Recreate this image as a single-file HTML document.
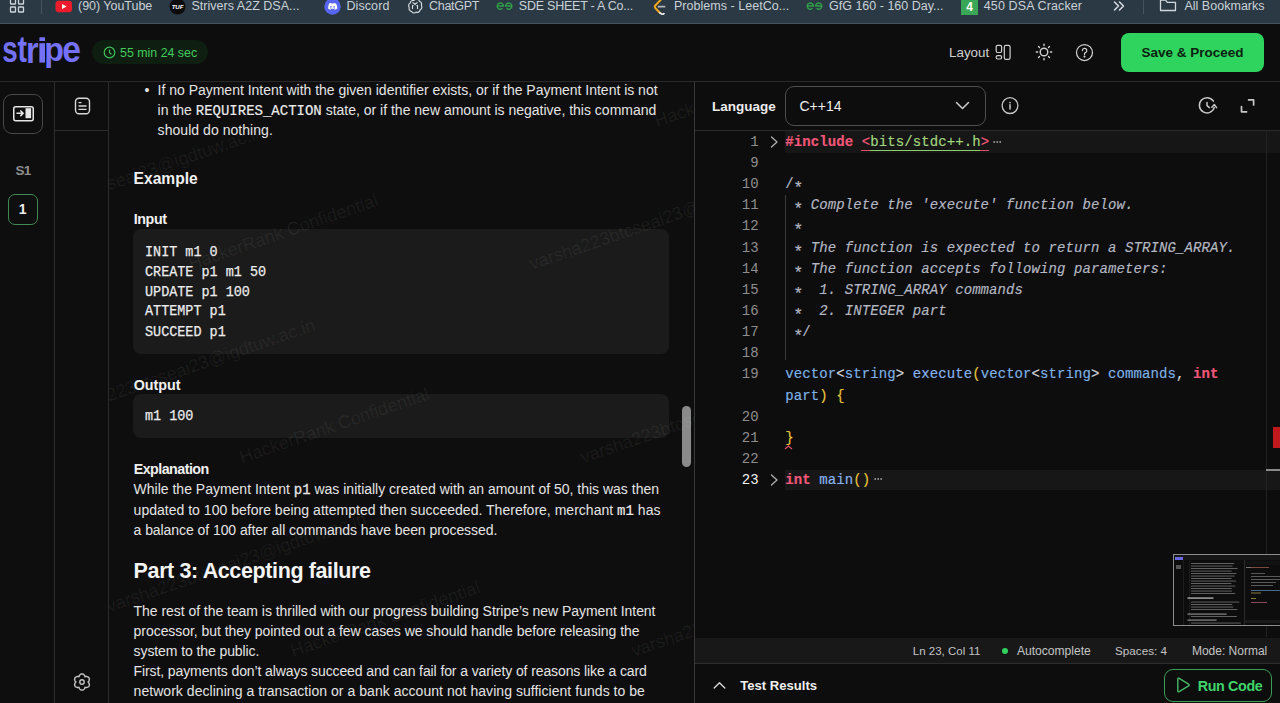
<!DOCTYPE html>
<html><head><meta charset="utf-8">
<style>
*{box-sizing:border-box;margin:0;padding:0}
html,body{width:1280px;height:703px;overflow:hidden;background:#0e0e0e;font-family:"Liberation Sans",sans-serif;color:#e8e8e8}
.abs{position:absolute}
#bm{position:absolute;left:0;top:0;width:1280px;height:24px;background:#2b3944;overflow:hidden;z-index:2}
#bm .it{position:absolute;top:-3px;white-space:nowrap}
#hdr{position:absolute;left:0;top:23px;width:1280px;height:59px;background:#0d0d0d;border-bottom:1px solid #2a2a2a}
#side1{position:absolute;left:0;top:82px;width:55px;height:621px;border-right:1px solid #2c2c2c;background:#0e0e0e}
#side2{position:absolute;left:55px;top:82px;width:54px;height:621px;border-right:1px solid #2c2c2c;background:#0e0e0e}
#content{position:absolute;left:109px;top:82px;width:585px;height:621px;background:#0e0e0e;overflow:hidden}
#editor{position:absolute;left:694px;top:82px;width:586px;height:621px;background:#0d0d0d;border-left:1px solid #383838}
.p{position:absolute;left:24px;font-size:14px;line-height:20.5px;color:#e6e6e6;white-space:nowrap}
.h{position:absolute;left:24px;font-weight:bold;color:#f2f2f2;white-space:nowrap}
.t{position:absolute;white-space:nowrap}
.mono{font-family:"Liberation Mono",monospace}
.codeblk{position:absolute;left:24px;width:536px;background:#1b1b1b;border-radius:8px}
.cl{position:absolute;font-family:"Liberation Mono",monospace;font-size:14px;white-space:pre;color:#bfc4cc}
.ln{position:absolute;right:0;width:60px;text-align:right;color:#8a8a8a}
</style></head><body>
<div id="bm">

<svg class="t" style="left:9px;top:-2px" width="17" height="16" viewBox="0 0 17 16" fill="none" stroke="#cdd5db" stroke-width="1.3"><rect x="1.5" y="1" width="5" height="5" rx=".6"/><rect x="9.5" y="1" width="5" height="5" rx=".6"/><rect x="1.5" y="9" width="5" height="5" rx=".6"/><rect x="9.5" y="9" width="5" height="5" rx=".6"/></svg>
<div class="t" style="left:40.5px;top:0;width:1px;height:14px;background:#46535d"></div>
<svg class="t" style="left:55px;top:0" width="18" height="13" viewBox="0 0 18 13"><rect x="0.5" y="0.8" width="16.5" height="11.5" rx="3.2" fill="#ec1c2c"/><path d="M7 4L11.5 6.5L7 9Z" fill="#fff"/></svg>
<svg class="t" style="left:169px;top:-2px" width="17" height="17" viewBox="0 0 17 17"><circle cx="8.5" cy="8.5" r="8" fill="#0b0b0b"/><text x="8.5" y="10.5" text-anchor="middle" font-family="Liberation Sans" font-weight="bold" font-style="italic" font-size="6" fill="#fff">TUF</text></svg>
<svg class="t" style="left:324px;top:-2px" width="17" height="17" viewBox="0 0 17 17"><circle cx="8.5" cy="8.5" r="8.2" fill="#5865f2"/><path d="M4.6 6.2c1-.8 2-1.1 2.6-1.1l.3.5c.6-.1 1.4-.1 2 0l.3-.5c.6 0 1.6.3 2.6 1.1.7 1.4 1 2.9.9 4.4-.8.6-1.7 1-2.5 1.2l-.5-.8c.4-.1.8-.3 1.1-.5-.1-.1-.2-.1-.3-.2-1.5.7-3.3.7-4.8 0-.1.1-.2.1-.3.2.3.2.7.4 1.1.5l-.5.8c-.8-.2-1.7-.6-2.5-1.2-.1-1.5.2-3 .9-4.4z" fill="#fff"/><circle cx="6.9" cy="8.9" r=".8" fill="#5865f2"/><circle cx="10.1" cy="8.9" r=".8" fill="#5865f2"/></svg>
<svg class="t" style="left:407px;top:-2.5px" width="16" height="16" viewBox="0 0 16 16" fill="none" stroke="#d8dde1" stroke-width="1.1"><path d="M8 1.5c1.6-.9 3.8-.2 4.4 1.7 1.8.4 2.7 2.5 1.9 4.2 1.1 1.5.5 3.7-1.2 4.4-.3 1.9-2.2 3-4 2.4-1.4 1.2-3.6 1-4.5-.7-1.9-.2-3-2.2-2.3-4-1.2-1.4-.8-3.6.9-4.4.2-1.9 2-3.1 3.8-2.6z"/><path d="M5.5 4.5l5 3v3.5M10.5 4.5l-5 3v3.5"/></svg>
<svg class="t" style="left:496px;top:0" width="17" height="12" viewBox="0 0 17 12" fill="none" stroke="#2f9d47" stroke-width="1.4"><path d="M1.2 6h6.2a3.1 3.1 0 1 0-.9 2.3M15.8 6H9.6a3.1 3.1 0 1 1 .9 2.3"/></svg>
<svg class="t" style="left:652px;top:-2px" width="16" height="17" viewBox="0 0 16 17"><path d="M9 1.5L3.5 7.2a2.2 2.2 0 0 0 0 3l4.3 4.6" fill="none" stroke="#f0a61c" stroke-width="2" stroke-linecap="round"/><path d="M6.5 8.7h6" stroke="#b8b8b8" stroke-width="1.8" stroke-linecap="round"/><path d="M7.8 14.8l1.5 1a2 2 0 0 0 2.6-.2" fill="none" stroke="#e8e8e8" stroke-width="1.8" stroke-linecap="round"/></svg>
<svg class="t" style="left:806px;top:0" width="17" height="12" viewBox="0 0 17 12" fill="none" stroke="#2f9d47" stroke-width="1.4"><path d="M1.2 6h6.2a3.1 3.1 0 1 0-.9 2.3M15.8 6H9.6a3.1 3.1 0 1 1 .9 2.3"/></svg>
<svg class="t" style="left:961px;top:-1px" width="17" height="16" viewBox="0 0 17 16"><rect x="0" y="0" width="17" height="16" fill="#3aa757"/><text x="8.5" y="12" text-anchor="middle" font-family="Liberation Sans" font-weight="bold" font-size="12" fill="#fff">4</text></svg>
<svg class="t" style="left:1112px;top:0" width="14" height="12" viewBox="0 0 14 12" fill="none" stroke="#d8dde1" stroke-width="1.5" stroke-linecap="round" stroke-linejoin="round"><path d="M2.5 2l4 4-4 4M7.5 2l4 4-4 4"/></svg>
<div class="t" style="left:1142.5px;top:0;width:1px;height:14px;background:#46535d"></div>
<svg class="t" style="left:1159px;top:-3px" width="18" height="16" viewBox="0 0 18 16" fill="none" stroke="#d0d7dc" stroke-width="1.3" stroke-linejoin="round"><path d="M1.5 3.2V13.5H16.5V5.3H8.3L6.6 3.2Z"/></svg>
<div class="t" id="b1" style="left:78.0px;top:-2.1px;font-size:12.5px;line-height:16px;color:#c9d1d7;letter-spacing:-0.028px;">(90) YouTube</div>
<div class="t" id="b2" style="left:191.5px;top:-2.1px;font-size:12.5px;line-height:16px;color:#c9d1d7;letter-spacing:0.018px;">Strivers A2Z DSA...</div>
<div class="t" id="b3" style="left:346.4px;top:-2.1px;font-size:12.5px;line-height:16px;color:#c9d1d7;letter-spacing:0.104px;">Discord</div>
<div class="t" id="b4" style="left:429.0px;top:-2.1px;font-size:12.5px;line-height:16px;color:#c9d1d7;letter-spacing:-0.285px;">ChatGPT</div>
<div class="t" id="b5" style="left:518.8px;top:-2.1px;font-size:12.5px;line-height:16px;color:#c9d1d7;letter-spacing:-0.231px;">SDE SHEET - A Co...</div>
<div class="t" id="b6" style="left:674.0px;top:-2.1px;font-size:12.5px;line-height:16px;color:#c9d1d7;letter-spacing:0.029px;">Problems - LeetCo...</div>
<div class="t" id="b7" style="left:829.0px;top:-2.1px;font-size:12.5px;line-height:16px;color:#c9d1d7;letter-spacing:0.005px;">GfG 160 - 160 Day...</div>
<div class="t" id="b8" style="left:983.8px;top:-2.1px;font-size:12.5px;line-height:16px;color:#c9d1d7;letter-spacing:0.116px;">450 DSA Cracker</div>
<div class="t" id="b9" style="left:1184.4px;top:-2.1px;font-size:12.5px;line-height:16px;color:#c9d1d7;letter-spacing:0.026px;">All Bookmarks</div>
<div class="t" style="left:0;top:23px;width:1280px;height:1px;background:#46545e"></div>
</div>
<div id="hdr">
  <svg class="abs" style="left:0;top:-23px" width="90" height="75" viewBox="0 0 90 75" font-family="Liberation Sans" font-weight="bold" font-size="1000" fill="#7471f6"><text transform="translate(2.23 62.26) scale(0.02777 0.03723)">s</text><text transform="translate(17.56 62.31) scale(0.02857 0.03621)">t</text><text transform="translate(25.97 62.64) scale(0.03225 0.03643)">r</text><rect x="39.4" y="37.3" width="5.6" height="3.8" rx="0.6"/><rect x="39.4" y="43.2" width="5.6" height="19.4"/><text transform="translate(44.27 61.00) scale(0.03221 0.03333)">p</text><text transform="translate(62.29 62.27) scale(0.03361 0.03675)">e</text></svg>
  <div class="abs" style="left:92px;top:17px;width:116px;height:24px;border-radius:12px;background:#0e1f11"></div>
  <svg class="abs" style="left:103px;top:23px" width="13" height="13" viewBox="0 0 13 13" fill="none" stroke="#3fbf58" stroke-width="1.2"><circle cx="6.5" cy="6.5" r="5.3"/><path d="M6.5 3.5V6.7L8.5 8.2"/></svg>
  <div class="abs" style="left:120px;top:21.8px;font-size:12.4px;line-height:16px;color:#44cc5e">55 min 24 sec</div>
  <div class="abs" style="left:949px;top:21px;font-size:13.4px;line-height:17px;color:#cfcfcf">Layout</div>
  <svg class="abs" style="left:995px;top:21px" width="16" height="17" viewBox="0 0 16 17" fill="none" stroke="#cfcfcf" stroke-width="1.2"><rect x="1.2" y="1.3" width="5.4" height="7.2" rx="1.4"/><rect x="1.2" y="11.6" width="5.4" height="3.4" rx="1.4"/><rect x="9.3" y="1.3" width="5.8" height="14" rx="1.6"/></svg>
  <svg class="abs" style="left:1034px;top:19.4px" width="20" height="20" viewBox="0 0 20 20" fill="none" stroke="#d0d0d0" stroke-width="1.4" stroke-linecap="round"><circle cx="10" cy="10" r="3.8"/><path d="M10.00 3.60L10.00 2.30M14.53 5.47L15.44 4.56M16.40 10.00L17.70 10.00M14.53 14.53L15.44 15.44M10.00 16.40L10.00 17.70M5.47 14.53L4.56 15.44M3.60 10.00L2.30 10.00M5.47 5.47L4.56 4.56"/></svg>
  <svg class="abs" style="left:1075px;top:19.9px" width="19" height="19" viewBox="0 0 19 19" fill="none" stroke="#d0d0d0" stroke-width="1.25" stroke-linecap="round"><circle cx="9.5" cy="9.5" r="8"/><path d="M7.4 7.6a2.2 2.2 0 1 1 3 2c-.6.3-.9.7-.9 1.3v.6"/><circle cx="9.5" cy="13.6" r=".45" fill="#d0d0d0"/></svg>
  <div class="abs" style="left:1121px;top:10px;width:143px;height:39px;border-radius:8px;background:#2fd45e;color:#0b1f10;font-weight:bold;font-size:13.5px;line-height:39px;text-align:center">Save &amp; Proceed</div>
</div>
<div id="side1">
  <div class="abs" style="left:3px;top:12px;width:40px;height:40px;border:1.5px solid #474747;border-radius:9px"></div>
  <svg class="abs" style="left:12px;top:23px" width="23" height="17" viewBox="0 0 23 17" fill="none" stroke="#e6e6e6" stroke-width="1.5"><rect x="1.75" y="1.75" width="19.5" height="14" rx="2"/><path d="M4.5 8.3h6.5M8.3 5.5l2.8 2.8-2.8 2.8"/><rect x="13.5" y="3.2" width="5.6" height="10" fill="#e6e6e6" stroke="none"/></svg>
  <div class="abs" style="left:0;top:81px;width:46px;text-align:center;font-size:13.5px;font-weight:bold;color:#8f8f8f;letter-spacing:-0.8px">S1</div>
  <div class="abs" style="left:7.5px;top:112px;width:30.5px;height:31px;border:1.5px solid #3f8a52;border-radius:7px;text-align:center;line-height:28px;font-size:14px;font-weight:bold;color:#ececec">1</div>
</div>
<div id="side2">
  <svg class="abs" style="left:19px;top:15px" width="17" height="18" viewBox="0 0 17 18" fill="none" stroke="#d8d8d8" stroke-width="1.4" stroke-linecap="round"><rect x="1.5" y="1.2" width="14" height="15.5" rx="3.5"/><path d="M5 5.6h2M5 9h7M5 12.4h7"/></svg>
  <div class="abs" style="left:0;top:48px;width:53px;height:1px;background:#2c2c2c"></div>
  <svg class="abs" style="left:17px;top:590px" width="20" height="20" viewBox="0 0 20 20" fill="none" stroke="#c4c4c4" stroke-width="1.4"><path d="M10.00 1.90 L10.42 1.93 L10.84 2.04 L11.23 2.20 L11.61 2.43 L11.95 2.72 L12.26 3.06 L12.52 3.44 L12.74 3.85 L12.90 4.30 L13.00 4.80 L13.48 4.64 L13.96 4.56 L14.43 4.54 L14.89 4.57 L15.33 4.67 L15.75 4.82 L16.13 5.03 L16.48 5.29 L16.77 5.60 L17.01 5.95 L17.20 6.33 L17.32 6.74 L17.37 7.17 L17.36 7.61 L17.28 8.05 L17.14 8.48 L16.95 8.90 L16.69 9.30 L16.39 9.67 L16.00 10.00 L16.39 10.33 L16.69 10.70 L16.95 11.10 L17.14 11.52 L17.28 11.95 L17.36 12.39 L17.37 12.83 L17.32 13.26 L17.20 13.67 L17.01 14.05 L16.77 14.40 L16.48 14.71 L16.13 14.97 L15.75 15.18 L15.33 15.33 L14.89 15.43 L14.43 15.46 L13.96 15.44 L13.48 15.36 L13.00 15.20 L12.90 15.70 L12.74 16.15 L12.52 16.56 L12.26 16.94 L11.95 17.28 L11.61 17.57 L11.23 17.80 L10.84 17.96 L10.42 18.07 L10.00 18.10 L9.58 18.07 L9.16 17.96 L8.77 17.80 L8.39 17.57 L8.05 17.28 L7.74 16.94 L7.48 16.56 L7.26 16.15 L7.10 15.70 L7.00 15.20 L6.52 15.36 L6.04 15.44 L5.57 15.46 L5.11 15.43 L4.67 15.33 L4.25 15.18 L3.87 14.97 L3.52 14.71 L3.23 14.40 L2.99 14.05 L2.80 13.67 L2.68 13.26 L2.63 12.83 L2.64 12.39 L2.72 11.95 L2.86 11.52 L3.05 11.10 L3.31 10.70 L3.61 10.33 L4.00 10.00 L3.61 9.67 L3.31 9.30 L3.05 8.90 L2.86 8.48 L2.72 8.05 L2.64 7.61 L2.63 7.17 L2.68 6.74 L2.80 6.33 L2.99 5.95 L3.23 5.60 L3.52 5.29 L3.87 5.03 L4.25 4.82 L4.67 4.67 L5.11 4.57 L5.57 4.54 L6.04 4.56 L6.52 4.64 L7.00 4.80 L7.10 4.30 L7.26 3.85 L7.48 3.44 L7.74 3.06 L8.05 2.72 L8.39 2.43 L8.77 2.20 L9.16 2.04 L9.58 1.93Z" stroke-linejoin="round"/><circle cx="10" cy="10" r="2.2"/></svg>
</div>
<div id="content">
<div class="t" id="c1" style="left:35.5px;top:-2.0px;font-size:14px;line-height:20px;color:#e4e4e4;">&bull;</div>
<div class="t" id="c2" style="left:48.6px;top:-2.0px;font-size:14px;line-height:20px;color:#e4e4e4;letter-spacing:-0.014px;">If no Payment Intent with the given identifier exists, or if the Payment Intent is not</div>
<div class="t" id="c3" style="left:48.6px;top:17.7px;font-size:14px;line-height:20px;color:#e4e4e4;letter-spacing:-0.001px;">in the <span class="mono" style="-webkit-text-stroke:0.2px #e4e4e4;color:#ececec">REQUIRES_ACTION</span> state, or if the new amount is negative, this command</div>
<div class="t" id="c4" style="left:48.6px;top:37.8px;font-size:14px;line-height:20px;color:#e4e4e4;letter-spacing:0.046px;">should do nothing.</div>
<div class="t" id="c5" style="left:24.6px;top:86.2px;font-size:15.6px;line-height:22px;font-weight:bold;color:#f0f0f0;letter-spacing:-0.008px;">Example</div>
<div class="t" id="c6" style="left:24.7px;top:127.0px;font-size:14.3px;line-height:20px;font-weight:bold;color:#f0f0f0;letter-spacing:-0.384px;">Input</div>
<div class="t" style="left:24px;top:147px;width:536px;height:125px;border-radius:8px;background:#1b1b1b"></div>
<div class="t mono" style="left:35.9px;top:160.3px;font-size:15.5px;line-height:20px;color:#ececec;transform:scaleX(0.8677);transform-origin:0 0;-webkit-text-stroke:0.25px #ececec">INIT m1 0</div>
<div class="t mono" style="left:35.9px;top:179.7px;font-size:15.5px;line-height:20px;color:#ececec;transform:scaleX(0.8677);transform-origin:0 0;-webkit-text-stroke:0.25px #ececec">CREATE p1 m1 50</div>
<div class="t mono" style="left:35.9px;top:199.5px;font-size:15.5px;line-height:20px;color:#ececec;transform:scaleX(0.8677);transform-origin:0 0;-webkit-text-stroke:0.25px #ececec">UPDATE p1 100</div>
<div class="t mono" style="left:35.9px;top:219.3px;font-size:15.5px;line-height:20px;color:#ececec;transform:scaleX(0.8677);transform-origin:0 0;-webkit-text-stroke:0.25px #ececec">ATTEMPT p1</div>
<div class="t mono" style="left:35.9px;top:239.5px;font-size:15.5px;line-height:20px;color:#ececec;transform:scaleX(0.8677);transform-origin:0 0;-webkit-text-stroke:0.25px #ececec">SUCCEED p1</div>
<div class="t" id="c7" style="left:24.7px;top:292.5px;font-size:14.3px;line-height:20px;font-weight:bold;color:#f0f0f0;">Output</div>
<div class="t" style="left:24px;top:312px;width:536px;height:44px;border-radius:8px;background:#1b1b1b"></div>
<div class="t mono" style="left:35.9px;top:323.9px;font-size:15.5px;line-height:20px;color:#ececec;transform:scaleX(0.8677);transform-origin:0 0;-webkit-text-stroke:0.25px #ececec">m1 100</div>
<div class="t" id="c8" style="left:24.7px;top:376.5px;font-size:14.3px;line-height:20px;font-weight:bold;color:#f0f0f0;letter-spacing:-0.543px;">Explanation</div>
<div class="t" id="c9" style="left:24.6px;top:397.1px;font-size:14px;line-height:20px;color:#e4e4e4;letter-spacing:-0.004px;">While the Payment Intent <span class="mono" style="-webkit-text-stroke:0.3px #e4e4e4">p1</span> was initially created with an amount of 50, this was then</div>
<div class="t" id="c10" style="left:24.6px;top:417.8px;font-size:14px;line-height:20px;color:#e4e4e4;letter-spacing:0.016px;">updated to 100 before being attempted then succeeded. Therefore, merchant <span class="mono" style="-webkit-text-stroke:0.2px #e4e4e4;color:#ececec">m1</span> has</div>
<div class="t" id="c11" style="left:24.6px;top:438.0px;font-size:14px;line-height:20px;color:#e4e4e4;letter-spacing:-0.066px;">a balance of 100 after all commands have been processed.</div>
<div class="t" id="c12" style="left:24.6px;top:474.6px;font-size:21.5px;line-height:28px;font-weight:bold;color:#f4f4f4;letter-spacing:-0.380px;">Part 3: Accepting failure</div>
<div class="t" id="c13" style="left:24.6px;top:518.7px;font-size:14px;line-height:20px;color:#e4e4e4;letter-spacing:-0.045px;">The rest of the team is thrilled with our progress building Stripe&rsquo;s new Payment Intent</div>
<div class="t" id="c14" style="left:24.6px;top:538.9px;font-size:14px;line-height:20px;color:#e4e4e4;letter-spacing:-0.048px;">processor, but they pointed out a few cases we should handle before releasing the</div>
<div class="t" id="c15" style="left:24.6px;top:559.1px;font-size:14px;line-height:20px;color:#e4e4e4;letter-spacing:-0.090px;">system to the public.</div>
<div class="t" id="c16" style="left:24.6px;top:578.9px;font-size:14px;line-height:20px;color:#e4e4e4;letter-spacing:-0.105px;">First, payments don&rsquo;t always succeed and can fail for a variety of reasons like a card</div>
<div class="t" id="c17" style="left:24.6px;top:599.1px;font-size:14px;line-height:20px;color:#e4e4e4;letter-spacing:0.041px;">network declining a transaction or a bank account not having sufficient funds to be</div>
<div class="t" style="left:573px;top:324px;width:9px;height:61px;border-radius:5px;background:#8a8a8a"></div>
<svg class="t" style="left:0;top:0" width="585" height="621" viewBox="0 0 585 621"><text x="-102.0" y="143.5" transform="rotate(-19 -102.0 143.5)" font-family="Liberation Sans" font-size="18" fill="rgba(255,255,255,0.06)" stroke="rgba(255,255,255,0.04)" stroke-width="0.6">varsha223btcseai23@igdtuw.ac.in</text><text x="31.0" y="-5.5" transform="rotate(-19 31.0 -5.5)" font-family="Liberation Sans" font-size="18" fill="rgba(255,255,255,0.06)" stroke="rgba(255,255,255,0.04)" stroke-width="0.6">HackerRank Confidential</text><text x="372.0" y="-5.5" transform="rotate(-19 372.0 -5.5)" font-family="Liberation Sans" font-size="18" fill="rgba(255,255,255,0.06)" stroke="rgba(255,255,255,0.04)" stroke-width="0.6">varsha223btcseai23@igdtuw.ac.in</text><text x="-384.0" y="331.0" transform="rotate(-19 -384.0 331.0)" font-family="Liberation Sans" font-size="18" fill="rgba(255,255,255,0.06)" stroke="rgba(255,255,255,0.04)" stroke-width="0.6">HackerRank Confidential</text><text x="-51.0" y="337.0" transform="rotate(-19 -51.0 337.0)" font-family="Liberation Sans" font-size="18" fill="rgba(255,255,255,0.06)" stroke="rgba(255,255,255,0.04)" stroke-width="0.6">varsha223btcseai23@igdtuw.ac.in</text><text x="82.0" y="188.0" transform="rotate(-19 82.0 188.0)" font-family="Liberation Sans" font-size="18" fill="rgba(255,255,255,0.06)" stroke="rgba(255,255,255,0.04)" stroke-width="0.6">HackerRank Confidential</text><text x="423.0" y="188.0" transform="rotate(-19 423.0 188.0)" font-family="Liberation Sans" font-size="18" fill="rgba(255,255,255,0.06)" stroke="rgba(255,255,255,0.04)" stroke-width="0.6">varsha223btcseai23@igdtuw.ac.in</text><text x="548.0" y="45.0" transform="rotate(-19 548.0 45.0)" font-family="Liberation Sans" font-size="18" fill="rgba(255,255,255,0.06)" stroke="rgba(255,255,255,0.04)" stroke-width="0.6">HackerRank Confidential</text><text x="-333.0" y="524.5" transform="rotate(-19 -333.0 524.5)" font-family="Liberation Sans" font-size="18" fill="rgba(255,255,255,0.06)" stroke="rgba(255,255,255,0.04)" stroke-width="0.6">HackerRank Confidential</text><text x="0.0" y="530.5" transform="rotate(-19 0.0 530.5)" font-family="Liberation Sans" font-size="18" fill="rgba(255,255,255,0.06)" stroke="rgba(255,255,255,0.04)" stroke-width="0.6">varsha223btcseai23@igdtuw.ac.in</text><text x="133.0" y="381.5" transform="rotate(-19 133.0 381.5)" font-family="Liberation Sans" font-size="18" fill="rgba(255,255,255,0.06)" stroke="rgba(255,255,255,0.04)" stroke-width="0.6">HackerRank Confidential</text><text x="474.0" y="381.5" transform="rotate(-19 474.0 381.5)" font-family="Liberation Sans" font-size="18" fill="rgba(255,255,255,0.06)" stroke="rgba(255,255,255,0.04)" stroke-width="0.6">varsha223btcseai23@igdtuw.ac.in</text><text x="-407.0" y="861.0" transform="rotate(-19 -407.0 861.0)" font-family="Liberation Sans" font-size="18" fill="rgba(255,255,255,0.06)" stroke="rgba(255,255,255,0.04)" stroke-width="0.6">varsha223btcseai23@igdtuw.ac.in</text><text x="-282.0" y="718.0" transform="rotate(-19 -282.0 718.0)" font-family="Liberation Sans" font-size="18" fill="rgba(255,255,255,0.06)" stroke="rgba(255,255,255,0.04)" stroke-width="0.6">HackerRank Confidential</text><text x="51.0" y="724.0" transform="rotate(-19 51.0 724.0)" font-family="Liberation Sans" font-size="18" fill="rgba(255,255,255,0.06)" stroke="rgba(255,255,255,0.04)" stroke-width="0.6">varsha223btcseai23@igdtuw.ac.in</text><text x="184.0" y="575.0" transform="rotate(-19 184.0 575.0)" font-family="Liberation Sans" font-size="18" fill="rgba(255,255,255,0.06)" stroke="rgba(255,255,255,0.04)" stroke-width="0.6">HackerRank Confidential</text><text x="525.0" y="575.0" transform="rotate(-19 525.0 575.0)" font-family="Liberation Sans" font-size="18" fill="rgba(255,255,255,0.06)" stroke="rgba(255,255,255,0.04)" stroke-width="0.6">varsha223btcseai23@igdtuw.ac.in</text><text x="-231.0" y="911.5" transform="rotate(-19 -231.0 911.5)" font-family="Liberation Sans" font-size="18" fill="rgba(255,255,255,0.06)" stroke="rgba(255,255,255,0.04)" stroke-width="0.6">HackerRank Confidential</text><text x="102.0" y="917.5" transform="rotate(-19 102.0 917.5)" font-family="Liberation Sans" font-size="18" fill="rgba(255,255,255,0.06)" stroke="rgba(255,255,255,0.04)" stroke-width="0.6">varsha223btcseai23@igdtuw.ac.in</text><text x="235.0" y="768.5" transform="rotate(-19 235.0 768.5)" font-family="Liberation Sans" font-size="18" fill="rgba(255,255,255,0.06)" stroke="rgba(255,255,255,0.04)" stroke-width="0.6">HackerRank Confidential</text><text x="576.0" y="768.5" transform="rotate(-19 576.0 768.5)" font-family="Liberation Sans" font-size="18" fill="rgba(255,255,255,0.06)" stroke="rgba(255,255,255,0.04)" stroke-width="0.6">varsha223btcseai23@igdtuw.ac.in</text></svg>
</div>
<div id="editor">
<div class="t" style="left:0.0px;top:48.0px;width:585.0px;height:1.0px;background:#2a2a2a"></div>
<div class="t" style="left:17.0px;top:14.6px;font-size:13.5px;line-height:20px;font-weight:bold;color:#ececec;">Language</div>
<div class="t" style="left:90.0px;top:4.0px;width:201.0px;height:40.0px;border:1.3px solid #4e4e4e;border-radius:9px;box-sizing:border-box"></div>
<div class="t" style="left:104.5px;top:13.9px;font-size:14px;line-height:20px;color:#f0f0f0;">C++14</div>
<svg class="t" style="left:260.0px;top:19.0px" width="15" height="9" viewBox="0 0 15 9" fill="none" ><path d="M1.5 1.5L7.5 7.5L13.5 1.5" stroke="#cfcfcf" stroke-width="1.5" stroke-linecap="round" stroke-linejoin="round"/></svg>
<svg class="t" style="left:305.0px;top:14.0px" width="20" height="20" viewBox="0 0 20 20" fill="none" ><circle cx="10" cy="9.6" r="7.9" stroke="#c8c8c8" stroke-width="1.3"/><path d="M10 8.7v4.2" stroke="#c8c8c8" stroke-width="1.5" stroke-linecap="round"/><circle cx="10" cy="6.6" r=".85" fill="#c8c8c8"/></svg>
<svg class="t" style="left:502.0px;top:14.0px" width="22" height="20" viewBox="0 0 22 20" fill="none" ><path d="M16.4 5.2A7.6 7.6 0 1 0 17.3 11.4" stroke="#c8c8c8" stroke-width="1.5" stroke-linecap="round"/><path d="M10 6.4V9.6L12.4 11.6" stroke="#c8c8c8" stroke-width="1.5" stroke-linecap="round" stroke-linejoin="round"/><path d="M14.8 11.3L17.4 8.6L19.6 11.6" stroke="#c8c8c8" stroke-width="1.5" stroke-linecap="round" stroke-linejoin="round"/></svg>
<svg class="t" style="left:544.0px;top:16.0px" width="17" height="16" viewBox="0 0 17 16" fill="none" ><path d="M9.6 1.9H14.6V7M2.5 8.6V13.8H7.6" stroke="#c8c8c8" stroke-width="1.7" stroke-linecap="round" stroke-linejoin="round"/></svg>
<div class="t" style="left:90.0px;top:49.0px;width:495.0px;height:21.5px;background:#161616"></div>
<div class="t" style="left:90.0px;top:387.5px;width:495.0px;height:20.5px;background:#171717"></div>
<div class="t" style="left:571.0px;top:49.0px;width:1.0px;height:506.0px;background:#222"></div>
<div class="t" style="left:578.0px;top:345.0px;width:7.0px;height:21.0px;background:#c0181c"></div>
<div class="t" style="left:571.0px;top:387.0px;width:14.0px;height:2.0px;background:#8a8a8a"></div>
<div class="t" style="left:90.0px;top:113.0px;width:1.0px;height:165.0px;background:#3a3a3a"></div>
<div class="t mono" style="left:0;width:63.6px;text-align:right;top:49.9px;font-size:14px;line-height:21px;color:#8e8e8e">1</div>
<div class="t mono" style="left:0;width:63.6px;text-align:right;top:71.0px;font-size:14px;line-height:21px;color:#8e8e8e">9</div>
<div class="t mono" style="left:0;width:63.6px;text-align:right;top:92.1px;font-size:14px;line-height:21px;color:#8e8e8e">10</div>
<div class="t mono" style="left:0;width:63.6px;text-align:right;top:113.3px;font-size:14px;line-height:21px;color:#8e8e8e">11</div>
<div class="t mono" style="left:0;width:63.6px;text-align:right;top:134.4px;font-size:14px;line-height:21px;color:#8e8e8e">12</div>
<div class="t mono" style="left:0;width:63.6px;text-align:right;top:155.6px;font-size:14px;line-height:21px;color:#8e8e8e">13</div>
<div class="t mono" style="left:0;width:63.6px;text-align:right;top:176.7px;font-size:14px;line-height:21px;color:#8e8e8e">14</div>
<div class="t mono" style="left:0;width:63.6px;text-align:right;top:197.8px;font-size:14px;line-height:21px;color:#8e8e8e">15</div>
<div class="t mono" style="left:0;width:63.6px;text-align:right;top:219.0px;font-size:14px;line-height:21px;color:#8e8e8e">16</div>
<div class="t mono" style="left:0;width:63.6px;text-align:right;top:240.1px;font-size:14px;line-height:21px;color:#8e8e8e">17</div>
<div class="t mono" style="left:0;width:63.6px;text-align:right;top:261.3px;font-size:14px;line-height:21px;color:#8e8e8e">18</div>
<div class="t mono" style="left:0;width:63.6px;text-align:right;top:282.4px;font-size:14px;line-height:21px;color:#8e8e8e">19</div>
<div class="t mono" style="left:0;width:63.6px;text-align:right;top:324.7px;font-size:14px;line-height:21px;color:#8e8e8e">20</div>
<div class="t mono" style="left:0;width:63.6px;text-align:right;top:345.8px;font-size:14px;line-height:21px;color:#8e8e8e">21</div>
<div class="t mono" style="left:0;width:63.6px;text-align:right;top:367.0px;font-size:14px;line-height:21px;color:#8e8e8e">22</div>
<div class="t mono" style="left:0;width:63.6px;text-align:right;top:388.1px;font-size:14px;line-height:21px;color:#f2f2f2">23</div>
<svg class="t" style="left:75.0px;top:53.6px" width="9" height="12" viewBox="0 0 9 12" fill="none" ><path d="M1.5 1L7 6L1.5 11" stroke="#b0b0b0" stroke-width="1.3" stroke-linecap="round" stroke-linejoin="round"/></svg>
<svg class="t" style="left:75.0px;top:391.8px" width="9" height="12" viewBox="0 0 9 12" fill="none" ><path d="M1.5 1L7 6L1.5 11" stroke="#b0b0b0" stroke-width="1.3" stroke-linecap="round" stroke-linejoin="round"/></svg>
<div class="t mono" style="white-space:pre;left:90.3px;top:49.9px;font-size:14px;line-height:21px;color:#d0d0d0;letter-spacing:0.09px;-webkit-text-stroke:0.15px currentColor"><span style="color:#f2577a;font-weight:bold">#include</span> <span style="color:#f2577a">&lt;</span><span style="color:#a3d77e">bits/stdc++.h</span><span style="color:#f2577a">&gt;</span></div>
<div class="t mono" style="white-space:pre;left:90.3px;top:92.1px;font-size:14px;line-height:21px;color:#d0d0d0;letter-spacing:0.09px;-webkit-text-stroke:0.15px currentColor"><span style="color:#b4b8c2">/<span style="display:inline-block;transform:translateY(4px) scale(1.2)">*</span></span></div>
<div class="t mono" style="white-space:pre;left:90.3px;top:113.3px;font-size:14px;line-height:21px;color:#d0d0d0;letter-spacing:0.09px;-webkit-text-stroke:0.15px currentColor"><span style="color:#b4b8c2"> <span style="display:inline-block;transform:translateY(4px) scale(1.2)">*</span> <i>Complete the 'execute' function below.</i></span></div>
<div class="t mono" style="white-space:pre;left:90.3px;top:134.4px;font-size:14px;line-height:21px;color:#d0d0d0;letter-spacing:0.09px;-webkit-text-stroke:0.15px currentColor"><span style="color:#b4b8c2"> <span style="display:inline-block;transform:translateY(4px) scale(1.2)">*</span></span></div>
<div class="t mono" style="white-space:pre;left:90.3px;top:155.6px;font-size:14px;line-height:21px;color:#d0d0d0;letter-spacing:0.09px;-webkit-text-stroke:0.15px currentColor"><span style="color:#b4b8c2"> <span style="display:inline-block;transform:translateY(4px) scale(1.2)">*</span> <i>The function is expected to return a STRING_ARRAY.</i></span></div>
<div class="t mono" style="white-space:pre;left:90.3px;top:176.7px;font-size:14px;line-height:21px;color:#d0d0d0;letter-spacing:0.09px;-webkit-text-stroke:0.15px currentColor"><span style="color:#b4b8c2"> <span style="display:inline-block;transform:translateY(4px) scale(1.2)">*</span> <i>The function accepts following parameters:</i></span></div>
<div class="t mono" style="white-space:pre;left:90.3px;top:197.8px;font-size:14px;line-height:21px;color:#d0d0d0;letter-spacing:0.09px;-webkit-text-stroke:0.15px currentColor"><span style="color:#b4b8c2"> <span style="display:inline-block;transform:translateY(4px) scale(1.2)">*</span>  <i>1. STRING_ARRAY commands</i></span></div>
<div class="t mono" style="white-space:pre;left:90.3px;top:219.0px;font-size:14px;line-height:21px;color:#d0d0d0;letter-spacing:0.09px;-webkit-text-stroke:0.15px currentColor"><span style="color:#b4b8c2"> <span style="display:inline-block;transform:translateY(4px) scale(1.2)">*</span>  <i>2. INTEGER part</i></span></div>
<div class="t mono" style="white-space:pre;left:90.3px;top:240.1px;font-size:14px;line-height:21px;color:#d0d0d0;letter-spacing:0.09px;-webkit-text-stroke:0.15px currentColor"><span style="color:#b4b8c2"> <span style="display:inline-block;transform:translateY(4px) scale(1.2)">*</span>/</span></div>
<div class="t mono" style="white-space:pre;left:90.3px;top:282.4px;font-size:14px;line-height:21px;color:#d0d0d0;letter-spacing:0.09px;-webkit-text-stroke:0.15px currentColor"><span style="color:#7fb2e6">vector</span><span style="color:#d0d4da">&lt;</span><span style="color:#7fb2e6">string</span><span style="color:#d0d4da">&gt;</span> <span style="color:#8ab4f0">execute</span><span style="color:#e9c53c">(</span><span style="color:#7fb2e6">vector</span><span style="color:#d0d4da">&lt;</span><span style="color:#7fb2e6">string</span><span style="color:#d0d4da">&gt;</span> <span style="color:#7fb2e6">commands</span><span style="color:#d0d4da">,</span> <span style="color:#f2577a;font-weight:bold">int</span></div>
<div class="t mono" style="white-space:pre;left:90.3px;top:303.5px;font-size:14px;line-height:21px;color:#d0d0d0;letter-spacing:0.09px;-webkit-text-stroke:0.15px currentColor"><span style="color:#7fb2e6">part</span><span style="color:#e9c53c">)</span> <span style="color:#e9c53c">{</span></div>
<div class="t mono" style="white-space:pre;left:90.3px;top:345.8px;font-size:14px;line-height:21px;color:#d0d0d0;letter-spacing:0.09px;-webkit-text-stroke:0.15px currentColor"><span style="color:#e9c53c">}</span></div>
<div class="t mono" style="white-space:pre;left:90.3px;top:388.1px;font-size:14px;line-height:21px;color:#d0d0d0;letter-spacing:0.09px;-webkit-text-stroke:0.15px currentColor"><span style="color:#f2577a;font-weight:bold">int</span> <span style="color:#8ab4f0">main</span><span style="color:#e9c53c">()</span></div>
<svg class="t" style="left:298.0px;top:57.6px" width="9" height="4" viewBox="0 0 9 4" fill="none" ><circle cx="1.2" cy="2" r="0.95" fill="#9a9a9a"/><circle cx="4.2" cy="2" r="0.95" fill="#9a9a9a"/><circle cx="7.2" cy="2" r="0.95" fill="#9a9a9a"/></svg>
<svg class="t" style="left:179.0px;top:395.1px" width="9" height="4" viewBox="0 0 9 4" fill="none" ><circle cx="1.2" cy="2" r="0.95" fill="#9a9a9a"/><circle cx="4.2" cy="2" r="0.95" fill="#9a9a9a"/><circle cx="7.2" cy="2" r="0.95" fill="#9a9a9a"/></svg>
<div class="t" style="left:166.0px;top:67.5px;width:128.0px;height:1.0px;background:linear-gradient(90deg,#e0506e 0 9px,#8fce6a 9px 119px,#e0506e 119px)"></div>
<svg class="t" style="left:89.0px;top:362.5px" width="14" height="5" viewBox="0 0 14 5" fill="none" ><path d="M1 4L4.5 1L8 4" stroke="#e0506e" stroke-width="1.2"/></svg>
<div class="t" style="left:0.0px;top:555.5px;width:585.0px;height:26.5px;background:#181818;border-bottom:1px solid #2c2c2c;box-sizing:border-box"></div>
<div class="t" style="left:217.8px;top:561.3px;font-size:11.5px;line-height:16px;color:#c4c4c4;">Ln 23, Col 11</div>
<div class="t" style="left:307.0px;top:565.6px;width:6.0px;height:6.0px;background:#2fd35e;border-radius:50%"></div>
<div class="t" style="left:321.9px;top:561.1px;font-size:12.1px;line-height:16px;color:#c4c4c4;">Autocomplete</div>
<div class="t" style="left:420.0px;top:561.2px;font-size:11.7px;line-height:16px;color:#c4c4c4;">Spaces: 4</div>
<div class="t" style="left:496.9px;top:561.1px;font-size:12px;line-height:16px;color:#c4c4c4;">Mode: Normal</div>
<svg class="t" style="left:477.5px;top:471.5px" width="121" height="72" viewBox="0 0 121 72" fill="none" ><rect x="0.5" y="0.5" width="120" height="71" stroke="#8c8c8c" fill="#0d0d0d"/><rect x="1" y="1" width="120" height="5" fill="#161616"/><rect x="2" y="3" width="8" height="3" fill="#6a66e0"/><line x1="10.5" y1="6" x2="10.5" y2="71" stroke="#262626" stroke-width="0.6"/><line x1="16.5" y1="6" x2="16.5" y2="71" stroke="#262626" stroke-width="0.6"/><rect x="3" y="11" width="5" height="4" fill="#555"/><rect x="18" y="9.1" width="43.2" height="0.9" fill="#6a6a6a"/><rect x="18" y="11.6" width="41.5" height="0.9" fill="#6a6a6a"/><rect x="18" y="14.1" width="46.5" height="0.9" fill="#6a6a6a"/><rect x="18" y="16.6" width="40.7" height="0.9" fill="#6a6a6a"/><rect x="18" y="19.1" width="45.4" height="0.9" fill="#6a6a6a"/><rect x="18" y="21.6" width="43.7" height="0.9" fill="#6a6a6a"/><rect x="18" y="24.1" width="40.6" height="0.9" fill="#6a6a6a"/><rect x="18" y="26.6" width="45.1" height="0.9" fill="#6a6a6a"/><rect x="18" y="29.1" width="40.4" height="0.9" fill="#6a6a6a"/><rect x="18" y="31.6" width="44.3" height="0.9" fill="#6a6a6a"/><rect x="18" y="34.1" width="40.7" height="0.9" fill="#6a6a6a"/><rect x="18" y="36.6" width="40.9" height="0.9" fill="#6a6a6a"/><rect x="18" y="39.1" width="44.2" height="0.9" fill="#6a6a6a"/><rect x="14.5" y="43.3" width="26" height="1.6" fill="#9a9a9a"/><rect x="18" y="47.6" width="48.3" height="0.9" fill="#6a6a6a"/><rect x="18" y="50.1" width="41.2" height="0.9" fill="#6a6a6a"/><rect x="18" y="52.6" width="42.2" height="0.9" fill="#6a6a6a"/><rect x="18" y="55.1" width="46.3" height="0.9" fill="#6a6a6a"/><rect x="14.5" y="59.5" width="39.1" height="1.2" fill="#8a8a8a"/><rect x="18" y="62.1" width="45.8" height="0.9" fill="#6a6a6a"/><rect x="14.5" y="65.5" width="29.1" height="1.2" fill="#8a8a8a"/><rect x="18" y="68.6" width="49.8" height="0.9" fill="#6a6a6a"/><line x1="71.5" y1="6" x2="71.5" y2="71" stroke="#333" stroke-width="0.8"/><rect x="72" y="7" width="49" height="4" fill="#121212"/><rect x="73" y="13" width="6" height="1" fill="#777"/><rect x="78" y="13" width="18" height="1" fill="#7a4a3a"/><rect x="78" y="19" width="14" height="1" fill="#555"/><rect x="78" y="22" width="30" height="1" fill="#5a5a5a"/><rect x="78" y="25" width="30" height="1" fill="#5a5a5a"/><rect x="78" y="28" width="25" height="1" fill="#5a5a5a"/><rect x="78" y="31" width="22" height="1" fill="#5a5a5a"/><rect x="78" y="36" width="40" height="1" fill="#4a6a8a"/><rect x="78" y="38.5" width="10" height="1" fill="#8a7a3a"/><rect x="78" y="44" width="5" height="1" fill="#8a7a3a"/><rect x="78" y="48" width="16" height="1" fill="#8a4a5a"/><rect x="72" y="66" width="49" height="3" fill="#1a1a1a"/></svg>
<svg class="t" style="left:18.0px;top:599.0px" width="13" height="9" viewBox="0 0 13 9" fill="none" ><path d="M1.2 7L6.5 1.8L11.8 7" stroke="#d6d6d6" stroke-width="1.4" stroke-linecap="round" stroke-linejoin="round"/></svg>
<div class="t" style="left:45.2px;top:594.8px;font-size:13.1px;line-height:18px;font-weight:bold;color:#f0f0f0;">Test Results</div>
<div class="t" style="left:469.4px;top:587.4px;width:107.2px;height:32.2px;border:1.5px solid #3b9c57;border-radius:9px;box-sizing:border-box"></div>
<svg class="t" style="left:480.0px;top:594.0px" width="16" height="18" viewBox="0 0 16 18" fill="none" ><path d="M2.8 3.2Q2.8 1.6 4.2 2.4L13.6 8.2Q14.8 9 13.6 9.8L4.2 15.6Q2.8 16.4 2.8 14.8Z" stroke="#47b866" stroke-width="1.4" stroke-linejoin="round"/></svg>
<div class="t" style="left:502.7px;top:594.6px;font-size:14.3px;line-height:18px;font-weight:bold;color:#3fd46a;letter-spacing:-0.35px">Run Code</div>
</div>
</body></html>
